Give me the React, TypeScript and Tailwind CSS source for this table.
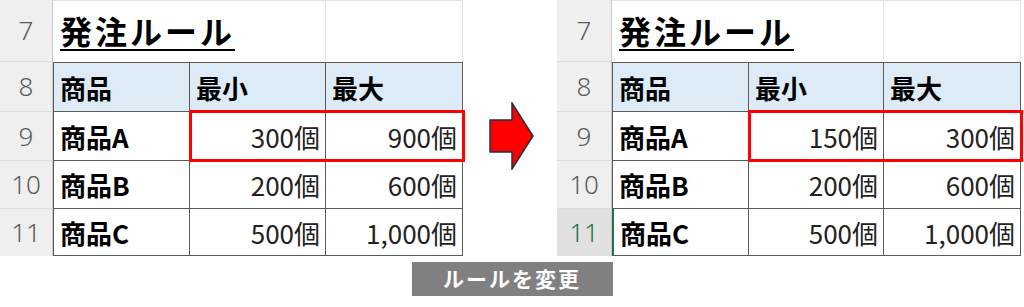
import React from 'react';

type Row = { name: string; min: string; max: string };

const font = { fontFamily: '"Noto Sans CJK JP", "Noto Sans", sans-serif' };

const rows: Row[] = [
  { name: '商品B', min: '200個', max: '600個' },
  { name: '商品C', min: '500個', max: '1,000個' },
];

// row header cell on the left of the sheet
const RowHead = ({ n, last, active }: { n: number; last?: boolean; active?: boolean }) => (
  <div
    className={
      'flex items-center justify-center text-[26px] font-light border-r border-[#c9c9c9] ' +
      (last ? '' : 'border-b border-b-[#dcdcdc] ') +
      (active ? 'bg-[#e1e1e1] text-[#217346]' : 'bg-[#efefef] text-[#5a5a5a]')
    }
    style={{ fontFamily: '"Noto Sans", "Liberation Sans", sans-serif' }}
  >
    {n}
  </div>
);

const Sheet = ({
  headW,
  cols,
  first,
  selected,
}: {
  headW: string;
  cols: string;
  first: Row;
  selected?: boolean;
}) => {
  return (
    <div className={'relative grid grid-rows-[62px_50px_49px_48px_47px] ' + headW + ' ' + cols} style={font}>
      {/* row 7 */}
      <RowHead n={7} />
      <div className="relative border-t border-[#e2e2e2]">
        <span className="absolute left-[7px] top-[5px] whitespace-nowrap text-[32px] font-bold text-black underline decoration-2 underline-offset-[5px] tracking-[3px]">
          発注ルール
        </span>
      </div>
      <div className="border-t border-r border-[#e2e2e2]" />
      <div className="border-t border-r border-[#e2e2e2]" />

      {/* row 8 */}
      <RowHead n={8} />
      {['商品', '最小', '最大'].map((h, i) => (
        <div
          key={h}
          className={
            'flex items-center pl-[6px] bg-[#ddebf7] text-[26px] font-bold text-black border-t border-r border-b border-[#5b5b5b] ' +
            (i === 0 ? 'border-l' : '')
          }
        >
          {h}
        </div>
      ))}

      {/* row 9 */}
      <RowHead n={9} />
      <div className="flex items-center pl-[6px] text-[26px] font-bold text-black border-l border-r border-b border-[#5b5b5b]">
        {first.name}
      </div>
      <div className="flex items-center justify-end pr-[5px] text-[26px] text-[#222] border-r border-b border-[#5b5b5b]">
        {first.min}
      </div>
      <div className="flex items-center justify-end pr-[5px] text-[26px] text-[#222] border-r border-b border-[#5b5b5b]">
        {first.max}
      </div>

      {rows.map((r, k) => (
        <React.Fragment key={r.name}>
          <RowHead n={10 + k} last={k === 1} active={selected && k === 1} />
          <div
            className={
              'flex items-center pl-[6px] text-[26px] font-bold text-black border-r border-b border-[#5b5b5b] ' +
              (selected && k === 1 ? 'border-l-2 border-l-[#217346]' : 'border-l')
            }
          >
            {r.name}
          </div>
          <div className="flex items-center justify-end pr-[5px] text-[26px] text-[#222] border-r border-b border-[#5b5b5b]">
            {r.min}
          </div>
          <div className="flex items-center justify-end pr-[5px] text-[26px] text-[#222] border-r border-b border-[#5b5b5b]">
            {r.max}
          </div>
        </React.Fragment>
      ))}

      {/* red highlight over row 9 */}
      <div
        className={
          'absolute top-[110px] h-[52px] border-[3px] border-[#ff0000] pointer-events-none ' +
          (selected ? 'left-[191px] w-[275px]' : 'left-[189px] w-[276px]')
        }
      />
    </div>
  );
};

export default function App() {
  return (
    <div className="w-[1024px] h-[307px] bg-white overflow-hidden">
      <div className="flex">
        <Sheet
          headW="w-[463px]"
          cols="grid-cols-[53px_137px_136px_137px]"
          first={{ name: '商品A', min: '300個', max: '900個' }}
        />

        {/* arrow between the two sheets */}
        <div className="w-[94px] pt-[102px] pl-[26px]">
          <svg width="46" height="68" viewBox="0 0 46 68">
            <polygon
              points="1,18 23,18 23,1 44,34 23,67 23,50 1,50"
              fill="#ff0000"
              stroke="#1d3344"
              strokeWidth="1.5"
              strokeLinejoin="miter"
            />
          </svg>
        </div>

        <Sheet
          headW="w-[464px]"
          cols="grid-cols-[55px_137px_135px_137px]"
          first={{ name: '商品A', min: '150個', max: '300個' }}
          selected
        />
      </div>

      <div className="flex justify-center mt-[6px]">
        <div
          className="w-[201px] h-[34px] bg-[#808080] text-white text-[21px] font-semibold tracking-[2px] flex items-center justify-center"
          style={font}
        >
          ルールを変更
        </div>
      </div>
    </div>
  );
}
